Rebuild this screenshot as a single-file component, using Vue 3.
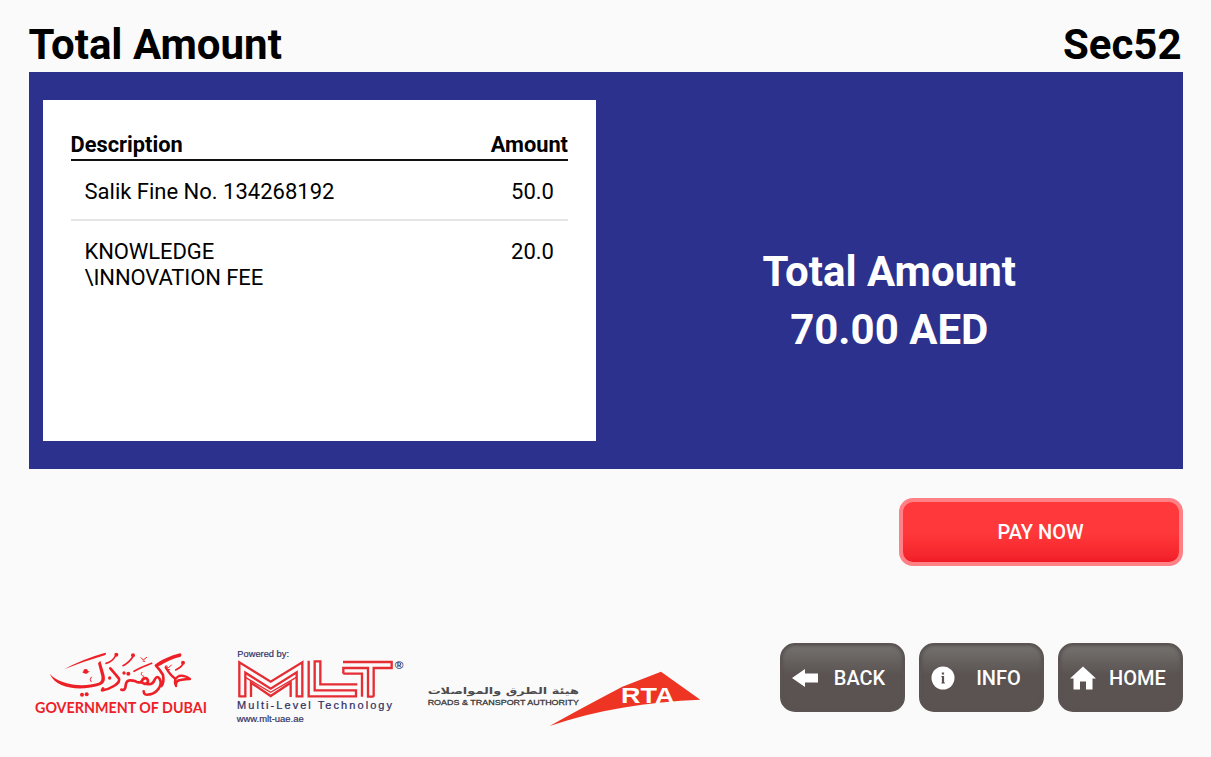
<script setup>
const lines = [
  { label: 'Salik Fine No. 134268192', amount: '50.0' },
  { label: 'KNOWLEDGE \\INNOVATION FEE', amount: '20.0' },
]
</script>

<template>
  <main class="screen">
    <header class="top">
      <h1>Total Amount</h1>
      <h1 class="code">Sec52</h1>
    </header>

    <section class="panel">
      <div class="card">
        <div class="thead"><span>Description</span><span>Amount</span></div>
        <div v-for="line in lines" :key="line.label" class="row">
          <span class="label">{{ line.label }}</span>
          <span class="amount">{{ line.amount }}</span>
        </div>
      </div>
      <div class="total">
        <div>Total Amount</div>
        <div class="sum">70.00 AED</div>
      </div>
    </section>

    <div class="actions">
      <button class="pay">PAY NOW</button>
    </div>

    <footer class="foot">
      <svg class="dubai" viewBox="0 0 600 270" role="img" aria-label="Government of Dubai">
        <g fill="#ee2027">
          <path d="M132 88Q185 58 256 38Q261 41 254 46Q195 63 132 88Z" />
          <path d="M89 101C118 134 187 144 236 128Q247 124 244 108L234 70L241 62L252 99C259 124 253 132 233 138C177 153 108 146 89 101Z" />
          <path d="M404 76C419 60 453 47 480 40Q488 42 482 50Q448 58 422 76Q407 84 404 76Z" />
        </g>
        <g fill="none" stroke="#ee2027" stroke-width="8" stroke-linecap="round" stroke-linejoin="round">
          <path d="M271 85Q285 101 297 116C302 130 272 147 246 151L249 145" />
          <path d="M304 149Q315 153 317 138Q318 121 330 121Q339 121 347 124Q353 130 365 125Q369 112 379 115C389 123 382 134 373 131Q366 130 364 124" />
          <path d="M379 131Q397 137 404 119Q412 104 419 117C430 135 410 159 390 163Q371 168 371 154" />
          <path d="M408 77Q421 91 429 105Q433 129 424 138" />
          <path d="M437 82Q450 104 463 114M468 138Q458 117 477 108Q492 104 510 117Q496 117 481 120Q467 121 468 138" stroke-width="7" />
        </g>
        <g fill="none" stroke="#ee2027" stroke-width="5" stroke-linecap="round">
          <path d="M258 70Q278 65 286 48M309 77Q328 67 338 51M467 90Q484 82 489 71M342 94Q363 82 395 70" />
        </g>
        <g fill="none" stroke="#ee2027" stroke-width="3" stroke-linecap="round">
          <path d="M363 53L370 60L380 52M369 63L374 64M214 111Q207 118 213 125M366 97Q359 105 371 109M438 76L445 84L454 75M443 88L449 89M189 97Q204 103 207 94" />
        </g>
        <g fill="#ee2027">
          <circle cx="186" cy="164" r="6" /><circle cx="200" cy="163" r="6" />
          <circle cx="197" cy="94" r="7" /><circle cx="269" cy="114" r="5" />
          <circle cx="312" cy="99" r="5" /><circle cx="325" cy="101" r="6" />
          <circle cx="289" cy="44" r="6" /><circle cx="339" cy="46" r="6" /><circle cx="489" cy="68" r="6" />
        </g>
        <text x="45" y="218" class="gov" textLength="516" lengthAdjust="spacingAndGlyphs">GOVERNMENT OF DUBAI</text>
      </svg>

      <svg class="mlt" viewBox="0 0 570 270" role="img" aria-label="MLT Multi-Level Technology">
        <text x="37" y="50" class="small" textLength="155" lengthAdjust="spacingAndGlyphs">Powered by:</text>
        <g fill="none" stroke="#e52d34" stroke-width="7">
          <path d="M43 172V67L137 125L232 67V169H215V97L137 146L61 98V169H43" />
          <path d="M78 171V128L137 168L197 128V171" />
          <path d="M61 112L137 157L214 112" stroke-width="4" />
          <path d="M251 62V169H393V151H269V64H286V133H397" />
          <path d="M354 66H500V84H446V170M354 66M500 84H464M355 101V84H429V170H446M355 101H411V170" />
        </g>
        <text x="36" y="207" class="tech" textLength="465">Multi-Level Technology</text>
        <text x="35" y="246" class="small" textLength="201" lengthAdjust="spacingAndGlyphs">www.mlt-uae.ae</text>
        <text x="509" y="86" class="reg" textLength="26" lengthAdjust="spacingAndGlyphs">®</text>
      </svg>

      <svg class="rta" viewBox="0 0 900 240" role="img" aria-label="Roads and Transport Authority">
        <text x="492" y="101" class="arabic" direction="rtl" textLength="454" lengthAdjust="spacingAndGlyphs">هيئة الطرق والمواصلات</text>
        <text x="38" y="134" class="roads" textLength="454" lengthAdjust="spacingAndGlyphs">ROADS &amp; TRANSPORT AUTHORITY</text>
        <path fill="#ee3524" d="M404 198Q470 160 622 80L738 35L856 119C700 125 540 150 404 198Z" />
        <text x="618" y="129" class="rtatext" textLength="160" lengthAdjust="spacingAndGlyphs">RTA</text>
      </svg>

      <nav class="nav">
        <button class="key">
          <svg viewBox="0 0 28 28"><path fill="#fff" d="M1 14L14 5V9.500H27V18.500H14V23Z" /></svg>
          <span>BACK</span>
        </button>
        <button class="key">
          <svg viewBox="0 0 28 28">
            <circle cx="13" cy="14" r="11.500" fill="#fff" />
            <path fill="#5a5352" d="M11.800 8.500h2.300v2h-2.300zM11.400 12h2.700v6.500h.8v1h-3.500v-1h.5v-5.500h-.5z" />
          </svg>
          <span>INFO</span>
        </button>
        <button class="key">
          <svg viewBox="0 0 28 28"><path fill="#fff" d="M14 2.500L27 14.500H23.500V25.500H17V17.500H11V25.500H4.500V14.500H1Z" /></svg>
          <span>HOME</span>
        </button>
      </nav>
    </footer>
  </main>
</template>

<style>
body { margin: 0; background: #fafafa; }
</style>

<style scoped>
.screen {
  box-sizing: border-box;
  width: 1211px;
  height: 757px;
  padding: 0 28.500px 0 28.500px;
  background: #fafafa;
  color: #000;
  font-family: Roboto, "Liberation Sans", sans-serif;
  overflow: hidden;
}
.top {
  display: flex;
  justify-content: space-between;
  height: 72px;
  box-sizing: border-box;
  padding: 20px 1px 0 0;
}
h1 { margin: 0; font-size: 42px; line-height: 50px; font-weight: 700; }
.panel {
  display: flex;
  box-sizing: border-box;
  height: 397px;
  padding: 28px 14px;
  background: #2b318c;
}
.card {
  box-sizing: border-box;
  width: 553.500px;
  height: 341px;
  padding: 31px 28px;
  background: #fff;
  font-size: 22px;
}
.thead {
  display: flex;
  justify-content: space-between;
  height: 28px;
  line-height: 28px;
  font-size: 21.800px;
  font-weight: 700;
  border-bottom: 2px solid #111;
}
.row {
  display: flex;
  justify-content: space-between;
  padding: 18px 14px 14px 14px;
  line-height: 26px;
  border-bottom: 2px solid #e5e5e5;
}
.row:last-child { border-bottom: 0; }
.label { max-width: 256px; }
.row:first-of-type .label { letter-spacing: 0; }
.row:last-child .label { width: 200px; letter-spacing: -.1px; }
.total {
  flex: 1;
  padding: 143px 0 0 14px;
  color: #fff;
  text-align: center;
  font-size: 42px;
  line-height: 58px;
  font-weight: 700;
}
.actions { display: flex; justify-content: flex-end; padding-top: 29px; }
button { margin: 0; font-family: inherit; color: #fff; font-weight: 500; font-size: 20px; }
.pay {
  box-sizing: border-box;
  width: 284px;
  height: 68px;
  border: 4px solid #ff8185;
  border-radius: 14px;
  background: linear-gradient(#ff393b 50%, #f5252d 90%, #ee1b26);
}
.foot { display: flex; margin: 74px 0 0 -8.500px; height: 100px; }
.foot > svg { flex: none; }
.dubai { width: 200px; height: 90px; }
.mlt { width: 190px; height: 90px; margin-left: 5px; }
.rta { width: 300px; height: 80px; margin-top: 20px; }
.gov { font: 700 44px Lato, sans-serif; fill: #ee2027; }
.small { font: 25px "Liberation Sans", sans-serif; fill: #30305f; stroke: #30305f; stroke-width: .5; }
.tech { font: 33px "Liberation Sans", sans-serif; fill: #30305f; stroke: #30305f; stroke-width: .7; }
.reg { font: 700 30px "Liberation Sans", sans-serif; fill: #30305f; }
.arabic { font: 700 28px "DejaVu Sans", sans-serif; fill: #4d4b4c; }
.roads { font: 24px "Liberation Sans", sans-serif; fill: #333; stroke: #333; stroke-width: .8; }
.rtatext { font: 700 68px "Liberation Sans", sans-serif; fill: #fff; }
.nav { display: flex; gap: 14px; margin: 3px 0 0 64.500px; }
.key {
  box-sizing: border-box;
  display: flex;
  align-items: center;
  width: 125px;
  height: 69px;
  padding: 0 2px 0 9px;
  border: 2px solid #5b5453;
  border-radius: 15px;
  background: linear-gradient(#74726f, #5a5352 45%, #5a5352);
  box-shadow: inset 0 0 3px 1px #5a5352;
}
.key svg { flex: none; width: 28px; height: 28px; }
.key span { flex: 1; text-align: center; }
</style>
